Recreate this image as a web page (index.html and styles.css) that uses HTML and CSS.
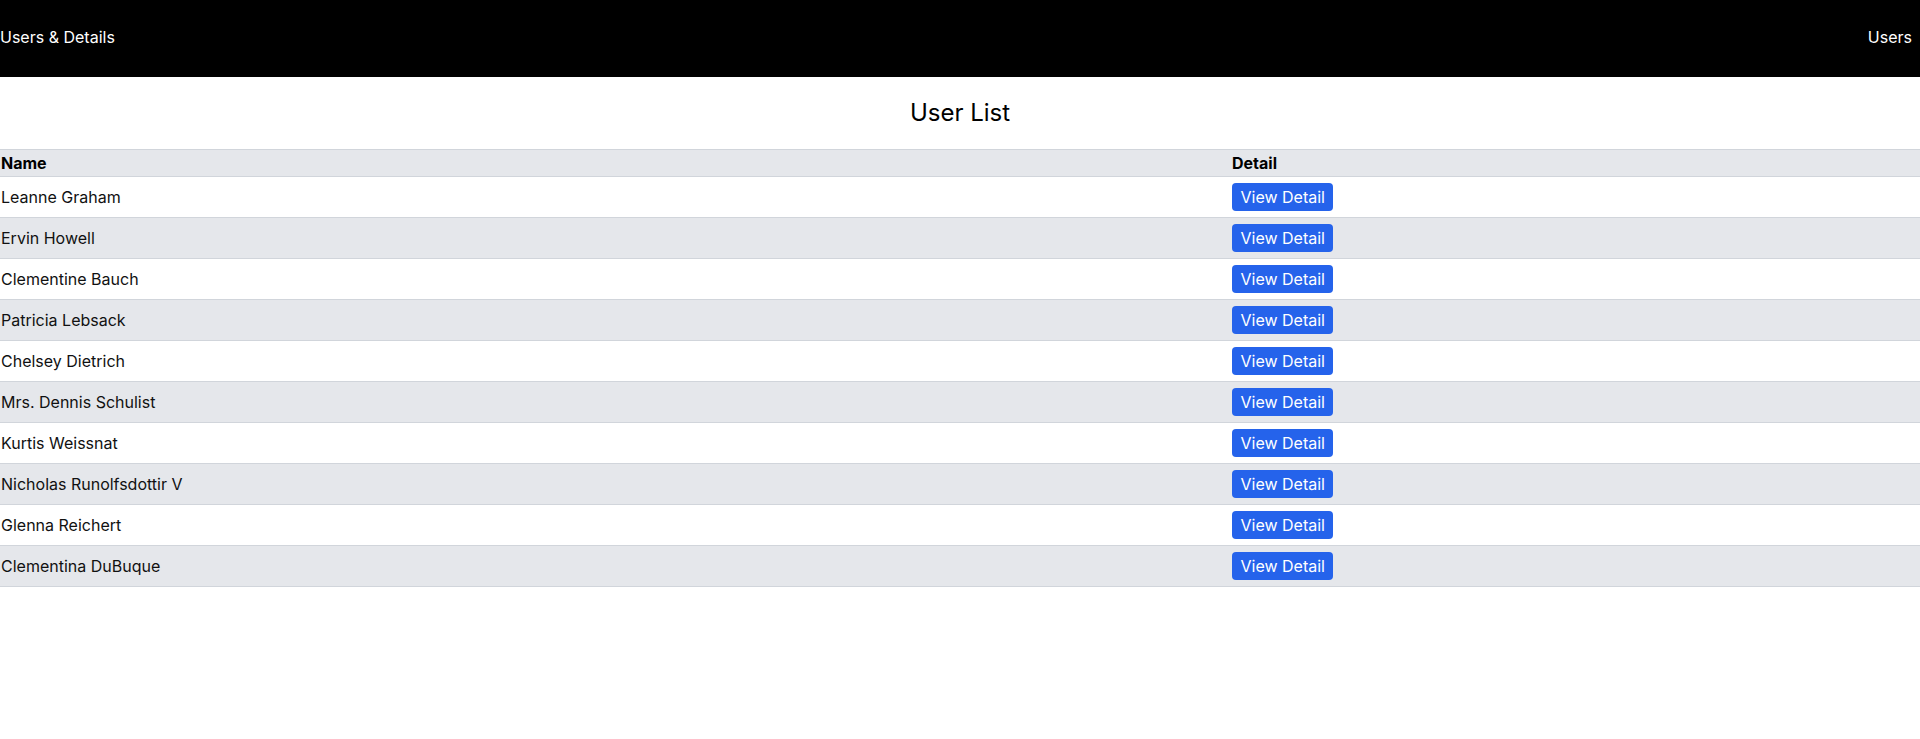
FILE: index.html
```html
<!DOCTYPE html>
<html lang="en">
<head>
<meta charset="utf-8">
<title>Users &amp; Details</title>
<link rel="stylesheet" href="styles.css">
</head>
<body>
<header class="topbar">
  <a class="brand" href="#">Users &amp; Details</a>
  <a class="nav-link" href="#">Users</a>
</header>
<main>
  <h1 class="title">User List</h1>
  <table class="users">
    <colgroup>
      <col class="col-name">
      <col class="col-detail">
    </colgroup>
    <thead>
      <tr><th>Name</th><th>Detail</th></tr>
    </thead>
    <tbody>
      <tr><td>Leanne Graham</td><td><button class="btn">View Detail</button></td></tr>
      <tr><td>Ervin Howell</td><td><button class="btn">View Detail</button></td></tr>
      <tr><td>Clementine Bauch</td><td><button class="btn">View Detail</button></td></tr>
      <tr><td>Patricia Lebsack</td><td><button class="btn">View Detail</button></td></tr>
      <tr><td>Chelsey Dietrich</td><td><button class="btn">View Detail</button></td></tr>
      <tr><td>Mrs. Dennis Schulist</td><td><button class="btn">View Detail</button></td></tr>
      <tr><td>Kurtis Weissnat</td><td><button class="btn">View Detail</button></td></tr>
      <tr><td>Nicholas Runolfsdottir V</td><td><button class="btn">View Detail</button></td></tr>
      <tr><td>Glenna Reichert</td><td><button class="btn">View Detail</button></td></tr>
      <tr><td>Clementina DuBuque</td><td><button class="btn">View Detail</button></td></tr>
    </tbody>
  </table>
</main>
</body>
</html>
```
FILE: styles.css
```css
* { box-sizing: border-box; }
html, body { margin: 0; padding: 0; }
body {
  font-family: Inter, "Liberation Sans", sans-serif;
  font-size: 16px;
  line-height: 24px;
  color: #111;
  background: #fff;
}
.topbar {
  height: 77px;
  background: #000;
  display: flex;
  align-items: flex-start;
  justify-content: space-between;
  padding: 25px 8px 0 0;
}
.brand, .nav-link {
  color: #fff;
  text-decoration: none;
}
.title {
  margin: 0;
  padding: 20px 0;
  text-align: center;
  font-size: 24px;
  line-height: 32px;
  font-weight: 400;
  color: #000;
}
.users {
  width: 100%;
  border-collapse: collapse;
  table-layout: fixed;
}
.col-name { width: 1231px; }
.users thead tr {
  background: #e5e7eb;
  border-top: 1px solid #d1d5db;
}
.users tr { border-bottom: 1px solid #d1d5db; }
.users tbody tr:nth-child(even) { background: #e5e7eb; }
.users th {
  text-align: left;
  font-weight: 700;
  color: #000;
  padding: 1px 1px;
}
.users td {
  padding: 6px 1px;
  vertical-align: middle;
}
.btn {
  font-family: inherit;
  font-size: 16px;
  line-height: 24px;
  color: #fff;
  background: #2563eb;
  border: 0;
  border-radius: 4px;
  padding: 2px 8.5px;
  display: block;
  cursor: pointer;
}
```
